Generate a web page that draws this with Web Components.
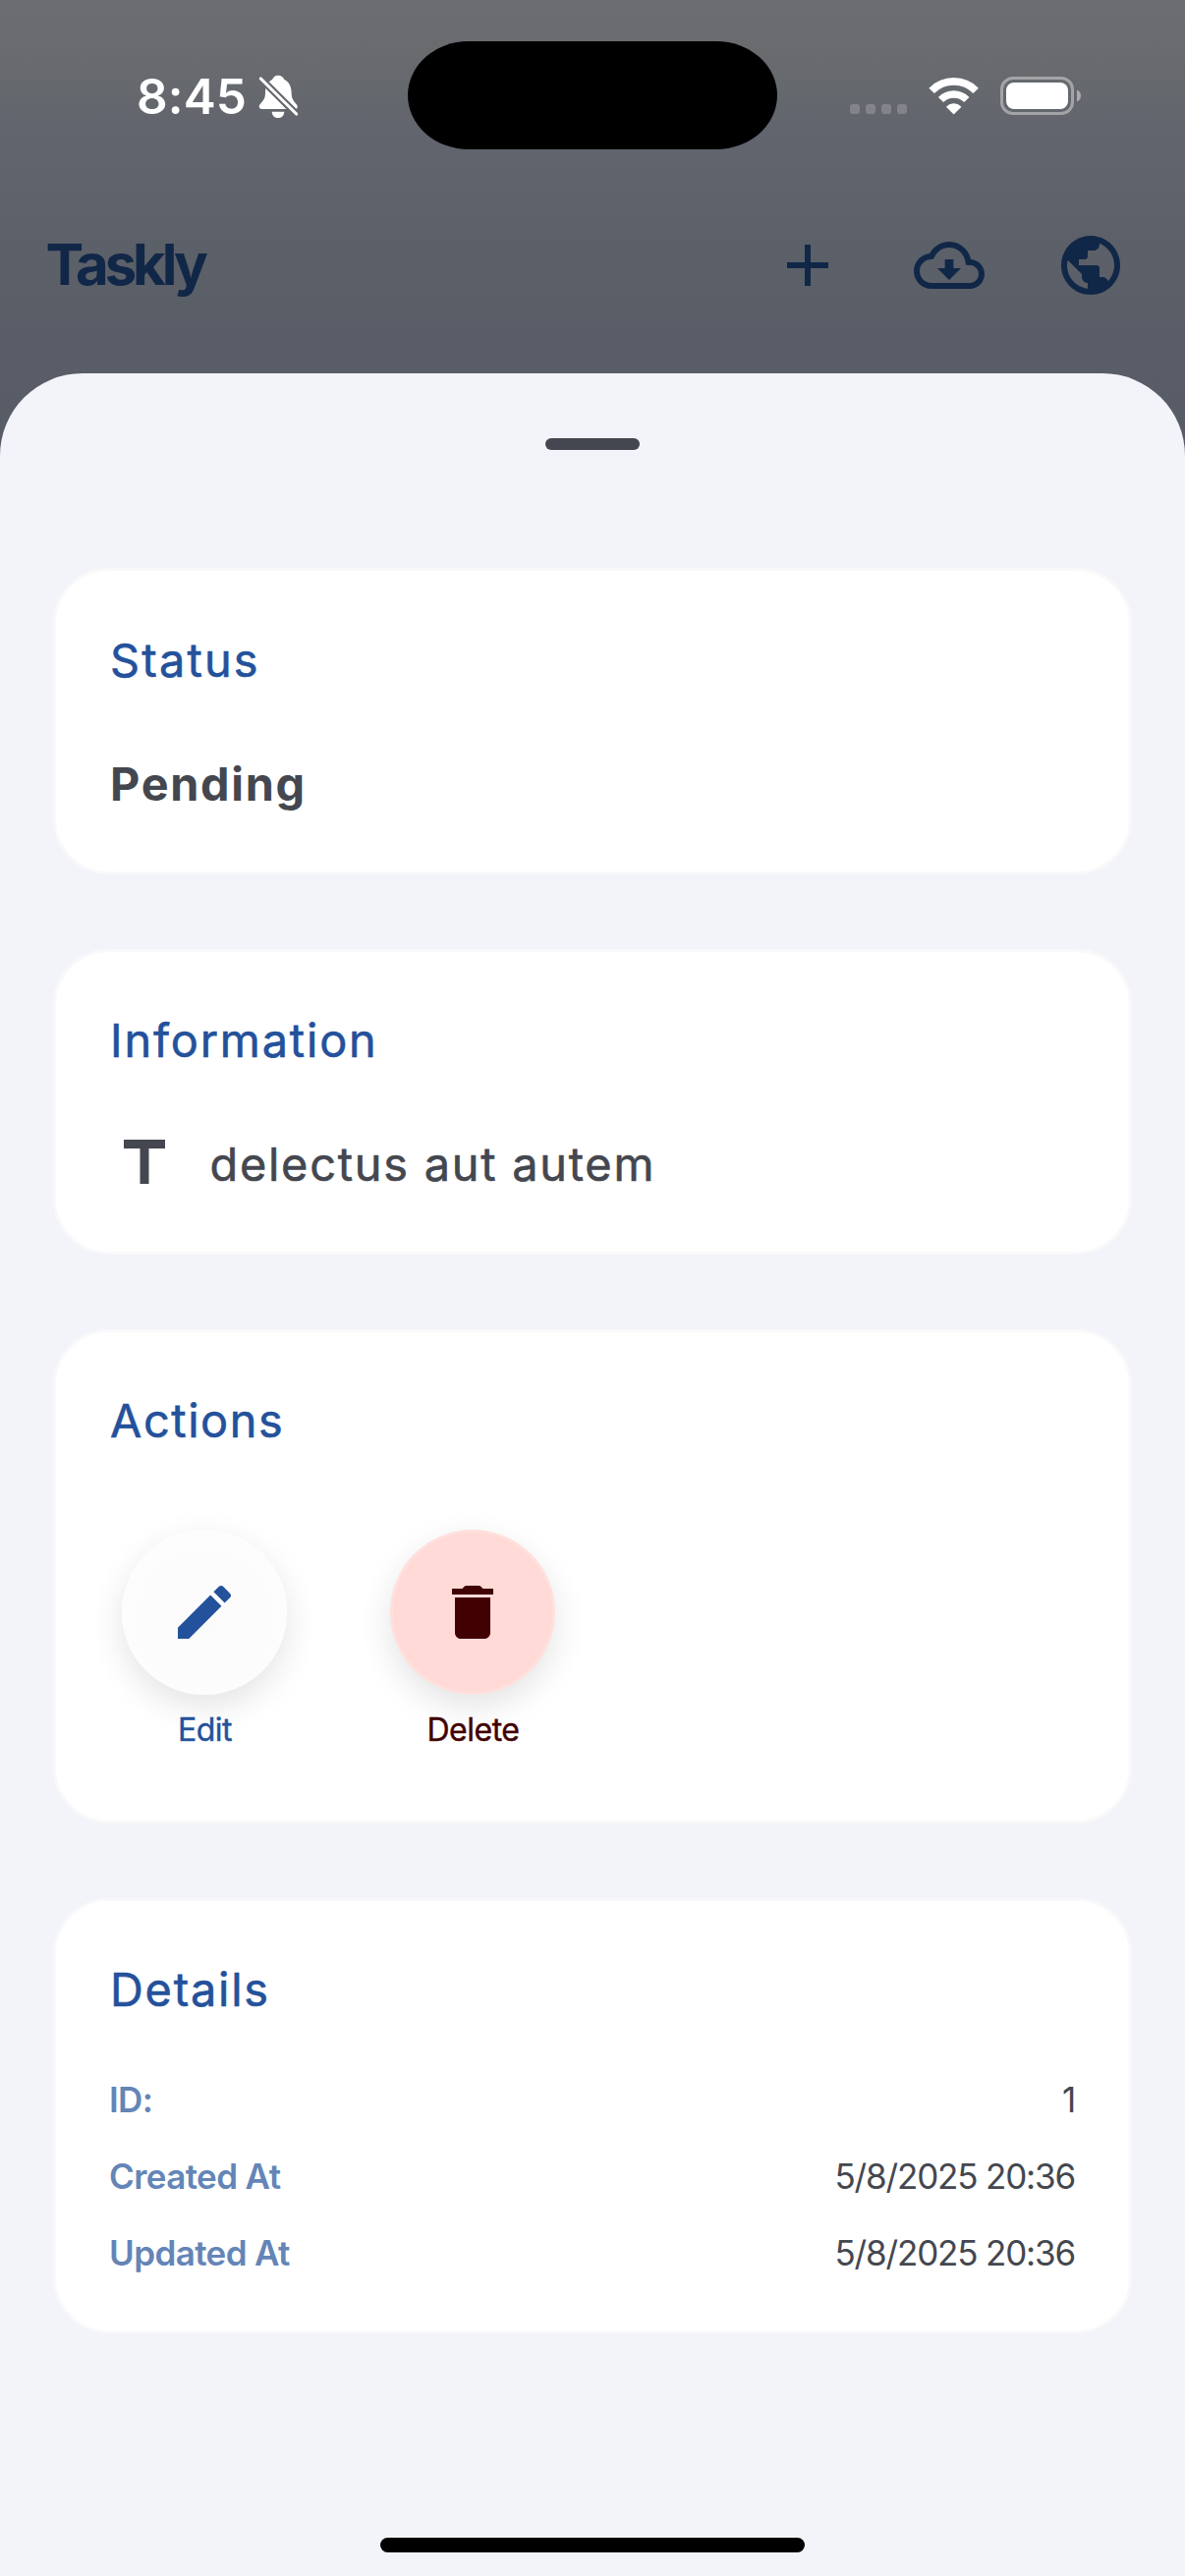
<!DOCTYPE html>
<html lang="en">
<head>
<meta charset="utf-8">
<title>Taskly</title>
<style>
  html, body { margin: 0; }
  body { width: 1206px; height: 2622px; overflow: hidden; font-family: Inter, "Liberation Sans", sans-serif; }
  info-card:first-child { margin-top: -1px; padding-top: 61px; }
</style>
</head>
<body>
<task-screen>
  <status-bar slot="status" time="8:45"></status-bar>
  <app-bar slot="bar">Taskly</app-bar>
  <bottom-sheet>
    <info-card heading="Status" tracking="2.2">
      <body-text>Pending</body-text>
    </info-card>
    <info-card heading="Information" tracking="1.85">
      <title-row>delectus aut autem</title-row>
    </info-card>
    <info-card heading="Actions" tracking="1.6">
      <action-row>
        <action-button kind="edit">Edit</action-button>
        <action-button kind="delete">Delete</action-button>
      </action-row>
    </info-card>
    <info-card heading="Details" tracking="1.8">
      <detail-list>
        <detail-row label="ID:">1</detail-row>
        <detail-row label="Created At">5/8/2025 20:36</detail-row>
        <detail-row label="Updated At">5/8/2025 20:36</detail-row>
      </detail-list>
    </info-card>
  </bottom-sheet>
</task-screen>

<script>
const define = (name, render) => customElements.define(name, class extends HTMLElement {
  constructor() { super(); this.attachShadow({ mode: 'open' }); }
  connectedCallback() { this.shadowRoot.innerHTML = render(this); }
});

define('task-screen', () => `
<style>
  :host { display: flex; flex-direction: column; width: 1206px; height: 2622px;
    background: linear-gradient(#6c6d70 0, #696b6e 50px, #66696d 85px, #62656d 125px, #5f636b 180px, #5c6068 240px, #5b5f67 300px, #595d68 350px, #575c67 460px); }
  main { flex: 1; margin-top: 34px; display: flex; }
</style>
<slot name="status"></slot>
<slot name="bar"></slot>
<main><slot></slot></main>`);

define('status-bar', el => `
<style>
  :host { display: grid; grid-template-columns: 415px 376px 1fr; align-items: center; height: 194px; color: #fff; }
  .left { display: flex; align-items: center; padding-left: 139px; gap: 12px; }
  .time { font-size: 49.5px; font-weight: 600; line-height: 60px; letter-spacing: .1px; margin-top: 2px; }
  .bell { margin-top: 3px; }
  .island { height: 110px; background: #000; border-radius: 62px / 55px; }
  .right { display: flex; align-items: center; padding-left: 74px; gap: 22px; }
  .dots { display: flex; gap: 6px; margin-top: 28px; }
  .dots i { width: 10px; height: 10px; border-radius: 3px; background: rgba(255,255,255,.2); }
  svg { display: block; }
</style>
<div class="left">
  <span class="time">${el.getAttribute('time')}</span>
  <svg class="bell" width="41" height="45" viewBox="429 48 123 135">
    <defs><mask id="m" maskUnits="userSpaceOnUse" x="420" y="40" width="140" height="150">
      <rect x="420" y="40" width="140" height="150" fill="#fff"/>
      <path d="M426 50L556 179" stroke="#000" stroke-width="22"/></mask></defs>
    <path mask="url(#m)" fill="#fff" d="M489 50C480 50 474 56 471 63C457 70 450 84 450 104C450 120 444 127 434 138C428 146 432 153 440 153H540C548 153 551 146 545 138C535 127 530 120 530 104C530 84 521 68 508 63C505 55 498 50 489 50Z"/>
    <path fill="#fff" d="M470 161H508C507 174 499 180 489 180S471 174 470 161Z"/>
    <path d="M436 60L545 168" stroke="#fff" stroke-width="9.5" stroke-linecap="round"/>
  </svg>
</div>
<div class="island"></div>
<div class="right">
  <div class="dots"><i></i><i></i><i></i><i></i></div>
  <svg width="51" height="39" viewBox="315 83.5 153 117" fill="none" stroke="#fff">
    <path d="M324.5 126.5A94.500 94.500 0 0 1 459.500 126.500" stroke-width="23"/>
    <path d="M352.500 154A55.500 55.500 0 0 1 431.500 154" stroke-width="22"/>
    <path d="M392 196L371.500 175.500A29 29 0 0 1 412.500 175.500Z" fill="#fff" stroke-width="4" stroke-linejoin="round"/>
  </svg>
  <svg width="83" height="39" viewBox="0 0 83 39">
    <rect x="1.5" y="1.5" width="72" height="36" rx="11.5" fill="none" stroke="#fff" stroke-opacity=".4" stroke-width="3"/>
    <rect x="6" y="6" width="63" height="27" rx="8" fill="#fff"/>
    <path d="M78 13.500C80.500 14.500 82 16.800 82 19.500S80.500 24.500 78 25.500Z" fill="#fff" fill-opacity=".45"/>
  </svg>
</div>`);

define('app-bar', () => `
<style>
  :host { display: flex; align-items: center; justify-content: space-between; height: 152px; padding: 0 60px 0 46.5px; color: #112748; }
  h1 { margin: -2px 0 0; font-size: 58px; line-height: 72px; font-weight: 700; letter-spacing: -4px; }
  nav { display: flex; gap: 72px; }
  svg { display: block; width: 72px; height: 72px; fill: currentColor; }
</style>
<h1><slot></slot></h1>
<nav>
  <svg viewBox="0 0 24 24"><path d="M19 13h-6v6h-2v-6H5v-2h6V5h2v6h6v2z"/></svg>
  <svg viewBox="0 0 24 24"><path d="M19.350 10.040C18.670 6.590 15.640 4 12 4 9.110 4 6.600 5.640 5.350 8.040 2.340 8.360 0 10.910 0 14c0 3.310 2.690 6 6 6h13c2.760 0 5-2.240 5-5 0-2.640-2.050-4.780-4.650-4.960zM19 18H6c-2.210 0-4-1.790-4-4 0-2.050 1.530-3.760 3.560-3.970l1.070-.11.5-.95C8.080 7.140 9.940 6 12 6c2.620 0 4.880 1.860 5.390 4.430l.3 1.500 1.530.11c1.560.1 2.780 1.410 2.780 2.960 0 1.650-1.350 3-3 3zm-5.550-8h-2.900v3H8l4 4 4-4h-2.550z"/></svg>
  <svg viewBox="0 0 24 24"><path d="M12 2C6.480 2 2 6.480 2 12s4.480 10 10 10 10-4.480 10-10S17.520 2 12 2zm-1 17.930c-3.950-.49-7-3.850-7-7.930 0-.62.080-1.210.21-1.790L9 15v1c0 1.100.9 2 2 2v1.930zm6.900-2.540c-.26-.81-1-1.390-1.900-1.390h-1v-3c0-.55-.45-1-1-1H8v-2h2c.55 0 1-.45 1-1V7h2c1.100 0 2-.9 2-2v-.41c2.930 1.190 5 4.060 5 7.410 0 2.080-.8 3.970-2.100 5.390z"/></svg>
</nav>`);

define('bottom-sheet', () => `
<style>
  :host { flex: 1; display: flex; flex-direction: column; align-items: center; box-sizing: border-box;
    background: #f3f4fa; border-radius: 84px 84px 0 0; padding: 66.4px 54px 24px; }
  .handle { width: 96px; height: 12px; border-radius: 6px; background: #44474f; }
  .cards { align-self: stretch; display: flex; flex-direction: column; gap: 76px; margin-top: 120.6px; }
  .home { width: 432px; height: 15px; border-radius: 8px; background: #000; margin-top: auto; }
</style>
<div class="handle"></div>
<div class="cards"><slot></slot></div>
<div class="home"></div>`);

define('info-card', el => `
<style>
  :host { display: block; background: #fff; border: 3px solid #f9f9fa; border-radius: 57px; padding: 60px 55px 0; }
  h2 { margin: 0; font-size: 46.8px; line-height: 60px; font-weight: 400; -webkit-text-stroke: .6px currentColor;
    letter-spacing: ${el.getAttribute('tracking')}px; color: #24519b; white-space: nowrap; }
</style>
<h2>${el.getAttribute('heading')}</h2>
<slot></slot>`);

define('body-text', () => `
<style>
  :host { display: block; margin-top: 66px; padding-bottom: 59px; font-size: 46.8px; line-height: 60px; font-weight: 700; letter-spacing: 1.7px; color: #44474f; }
</style><slot></slot>`);

define('title-row', () => `
<style>
  :host { display: flex; align-items: center; height: 72px; margin-top: 59px; padding-bottom: 54px; gap: 30.5px; margin-left: -1px;
    font-size: 46.8px; line-height: 60px; font-weight: 400; -webkit-text-stroke: .6px currentColor; letter-spacing: 1.78px; color: #44474f; }
  svg { width: 72px; height: 72px; fill: currentColor; }
  span { margin-top: 2px; }
</style>
<svg viewBox="0 0 24 24"><rect x="5" y="4" width="14" height="3"/><rect x="10.5" y="6" width="3" height="13"/></svg>
<span><slot></slot></span>`);

define('action-row', () => `
<style>:host { display: flex; gap: 105px; margin-top: 81px; padding: 0 0 70px 12px; }</style><slot></slot>`);

const actionIcons = {
  edit: '<path d="M3 17.250V21h3.750L17.810 9.940l-3.750-3.750L3 17.250zM20.710 7.040c.39-.39.39-1.020 0-1.410l-2.340-2.340c-.39-.39-1.020-.39-1.410 0l-1.830 1.830 3.750 3.750 1.830-1.830z"/>',
  delete: '<path d="M6 19c0 1.100.9 2 2 2h8c1.100 0 2-.9 2-2V7H6v12zM18.500 4h-3l-.71-.71c-.18-.18-.44-.29-.7-.29H9.910c-.26 0-.52.11-.7.290L8.500 4H5v2h14V4z"/>'
};
define('action-button', el => `
<style>
  :host { display: flex; flex-direction: column; align-items: center; width: 168px; color: #24519b; }
  :host([kind="delete"]) { color: #410002; }
  .disc { box-sizing: border-box; width: 168px; height: 168px; border-radius: 50%; display: flex; align-items: center; justify-content: center;
    background: radial-gradient(circle at 50% 56%, #fbfbfb 0, #fcfcfc 50%, #fefefe 100%); box-shadow: 0 12px 34px rgba(0,0,0,.11); }
  :host([kind="delete"]) .disc { background: #ffdad7; border: 3px solid #ffe0dc; }
  svg { width: 72px; height: 72px; fill: currentColor; }
  span { margin: 14px 0 0 1px; font-size: 32px; line-height: 44px; font-weight: 400; -webkit-text-stroke: .4px currentColor; letter-spacing: -.5px; }
</style>
<div class="disc"><svg viewBox="0 0 24 24">${actionIcons[el.getAttribute('kind')]}</svg></div>
<span><slot></slot></span>`);

define('detail-list', () => `
<style>:host { display: flex; flex-direction: column; margin: 43px 0 0 -1px; padding-bottom: 40px; }</style><slot></slot>`);

define('detail-row', el => `
<style>
  :host { display: flex; justify-content: space-between; font-size: 35px; line-height: 78px; color: #44474f; letter-spacing: -1.17px; }
  .label { font-weight: 600; color: #6485b7; letter-spacing: -.6px; }
</style>
<span class="label">${el.getAttribute('label')}</span><span><slot></slot></span>`);
</script>
</body>
</html>
